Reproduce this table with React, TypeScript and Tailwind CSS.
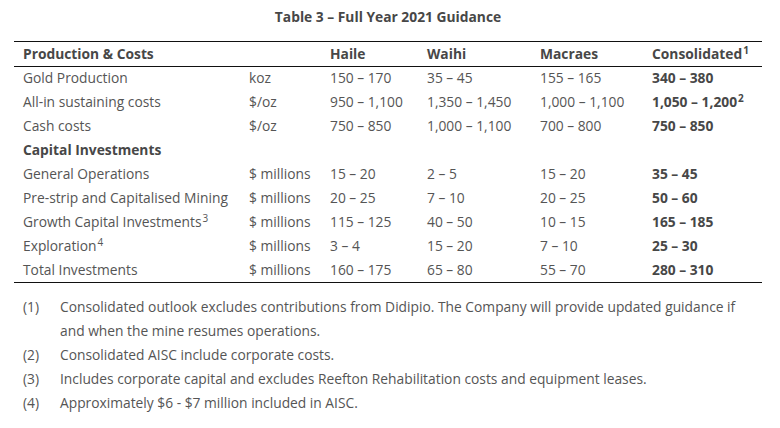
type Row = {
  label: string;
  sup?: string;
  unit: string;
  haile: string;
  waihi: string;
  macraes: string;
  total: string;
  totalSup?: string;
};

const production: Row[] = [
  { label: 'Gold Production', unit: 'koz', haile: '150 – 170', waihi: '35 – 45', macraes: '155 – 165', total: '340 – 380' },
  { label: 'All-in sustaining costs', unit: '$/oz', haile: '950 – 1,100', waihi: '1,350 – 1,450', macraes: '1,000 – 1,100', total: '1,050 – 1,200', totalSup: '2' },
  { label: 'Cash costs', unit: '$/oz', haile: '750 – 850', waihi: '1,000 – 1,100', macraes: '700 – 800', total: '750 – 850' },
];

const capital: Row[] = [
  { label: 'General Operations', unit: '$ millions', haile: '15 – 20', waihi: '2 – 5', macraes: '15 – 20', total: '35 – 45' },
  { label: 'Pre-strip and Capitalised Mining', unit: '$ millions', haile: '20 – 25', waihi: '7 – 10', macraes: '20 – 25', total: '50 – 60' },
  { label: 'Growth Capital Investments', sup: '3', unit: '$ millions', haile: '115 – 125', waihi: '40 – 50', macraes: '10 – 15', total: '165 – 185' },
  { label: 'Exploration', sup: '4', unit: '$ millions', haile: '3 – 4', waihi: '15 – 20', macraes: '7 – 10', total: '25 – 30' },
  { label: 'Total Investments', unit: '$ millions', haile: '160 – 175', waihi: '65 – 80', macraes: '55 – 70', total: '280 – 310' },
];

const notes = [
  { n: '(1)', text: (
    <>
      Consolidated outlook excludes contributions from Didipio. The Company will provide updated guidance if
      <br />
      and when the mine resumes operations.
    </>
  ) },
  { n: '(2)', text: 'Consolidated AISC include corporate costs.' },
  { n: '(3)', text: 'Includes corporate capital and excludes Reefton Rehabilitation costs and equipment leases.' },
  { n: '(4)', text: 'Approximately $6 - $7 million included in AISC.' },
];

function Sup({ children }: { children: string }) {
  return <sup className="text-[10px] relative -top-[5px] ml-px">{children}</sup>;
}

function DataRow({ row }: { row: Row }) {
  return (
    <tr className="h-6">
      <td className="pl-[9px] whitespace-nowrap">
        {row.label}
        {row.sup && <Sup>{row.sup}</Sup>}
      </td>
      <td className="pl-[9px] whitespace-nowrap">{row.unit}</td>
      <td className="pl-[9px] whitespace-nowrap">{row.haile}</td>
      <td className="pl-[9px] whitespace-nowrap">{row.waihi}</td>
      <td className="pl-[9px] whitespace-nowrap">{row.macraes}</td>
      <td className="pl-[9px] whitespace-nowrap font-bold text-[#474747]">
        {row.total}
        {row.totalSup && <Sup>{row.totalSup}</Sup>}
      </td>
    </tr>
  );
}

export default function App() {
  return (
    <div className="w-[780px] h-[428px] bg-white text-[#555555] text-[13.8px] font-['Open_Sans',sans-serif]">
      <h1 className="pt-[7px] h-[41px] w-[748px] ml-[14px] text-center font-bold text-[13.8px] leading-5 text-[#474747]">
        Table 3 – Full Year 2021 Guidance
      </h1>
      <table className="ml-[14px] w-[748px] table-fixed border-collapse border-y-[1.5px] border-[#111111]">
        <colgroup>
          <col className="w-[226px]" />
          <col className="w-[81px]" />
          <col className="w-[97px]" />
          <col className="w-[113px]" />
          <col className="w-[112px]" />
          <col className="w-[119px]" />
        </colgroup>
        <thead>
          <tr className="h-[25px] border-b-[1.5px] border-[#111111] font-bold text-[#474747] text-left">
            <th className="pl-[9px] font-bold">Production &amp; Costs</th>
            <th />
            <th className="pl-[9px] font-bold">Haile</th>
            <th className="pl-[9px] font-bold">Waihi</th>
            <th className="pl-[9px] font-bold">Macraes</th>
            <th className="pl-[9px] font-bold whitespace-nowrap">
              Consolidated<Sup>1</Sup>
            </th>
          </tr>
        </thead>
        <tbody>
          {production.map((r) => (
            <DataRow key={r.label} row={r} />
          ))}
          <tr className="h-6">
            <td className="pl-[9px] font-bold text-[#474747]" colSpan={6}>
              Capital Investments
            </td>
          </tr>
          {capital.map((r) => (
            <DataRow key={r.label} row={r} />
          ))}
        </tbody>
      </table>
      <ol className="mt-3 ml-[23px] leading-6">
        {notes.map((note) => (
          <li key={note.n} className="flex">
            <span className="w-[37px] shrink-0">{note.n}</span>
            <span>{note.text}</span>
          </li>
        ))}
      </ol>
    </div>
  );
}
